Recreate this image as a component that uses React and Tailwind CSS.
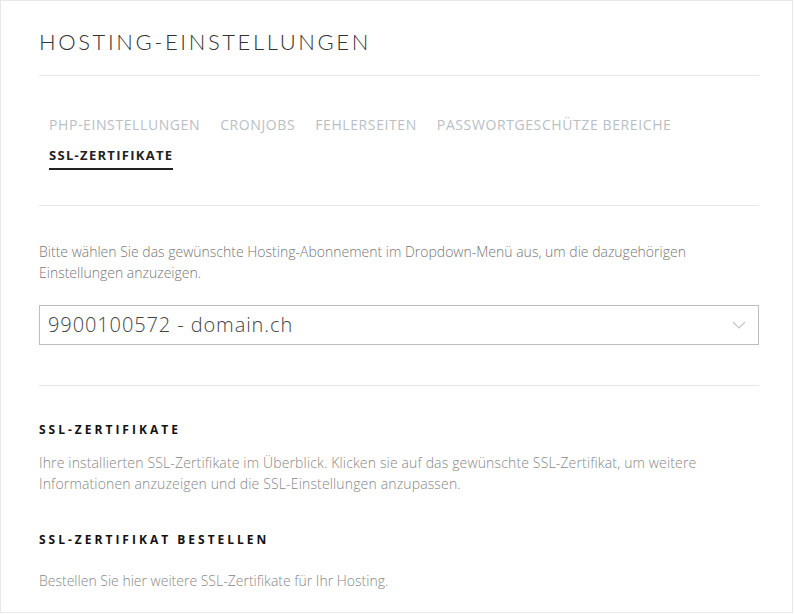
import React from 'react';

const tabs = [
  { label: 'PHP-Einstellungen' },
  { label: 'Cronjobs' },
  { label: 'Fehlerseiten' },
  { label: 'Passwortgeschütze Bereiche' },
  { label: 'SSL-Zertifikate', active: true },
];

function App() {
  return (
    <div className="w-[793px] min-h-[613px] border border-[#e8e8e8] bg-white font-['Open_Sans',sans-serif]">
      <div className="pl-[38px] pr-[33px] pt-[28px]">
        <h1 className="text-[22px] font-light leading-[26px] tracking-[2.6px] text-[#333] uppercase font-['Lato',sans-serif]">
          Hosting-Einstellungen
        </h1>
        <div className="mt-[20px] border-t border-[#e6e6e6]" />

        <div className="flex flex-wrap pt-[36px] pb-[33px]">
          {tabs.map((tab) => (
            <div key={tab.label} className="px-[10px] h-[30px]">
              <span
                className={
                  tab.active
                    ? 'inline-block pb-[4px] border-b-2 border-[#222] text-[13px] font-bold tracking-[1.3px] text-[#222] uppercase leading-[18px]'
                    : 'inline-block text-[14px] tracking-[0.6px] text-[#b9c0c5] uppercase leading-[18px]'
                }
              >
                {tab.label}
              </span>
            </div>
          ))}
        </div>

        <div className="border-t border-[#e6e6e6]" />

        <p className="pt-[35px] text-[14px] font-light leading-[21px] text-[#777]">
          Bitte wählen Sie das gewünschte Hosting-Abonnement im Dropdown-Menü aus, um die dazugehörigen
          Einstellungen anzuzeigen.
        </p>

        <div className="mt-[22px] h-[40px] border border-[#bdbdbd] flex items-center justify-between pl-[8px] pr-[12px]">
          <span className="text-[20px] font-light tracking-[0.9px] text-[#444]">9900100572 - domain.ch</span>
          <svg width="14" height="8" viewBox="0 0 14 8" fill="none" stroke="#c4c4c4" strokeWidth="1.2">
            <path d="M1 1l6 6 6-6" />
          </svg>
        </div>

        <div className="mt-[40px] border-t border-[#e6e6e6]" />

        <h2 className="pt-[36px] text-[12px] font-bold tracking-[3px] text-[#111] uppercase leading-[16px]">
          SSL-Zertifikate
        </h2>
        <p className="mt-[14px] text-[14px] font-light leading-[21px] text-[#888] tracking-[0.15px]">
          Ihre installierten SSL-Zertifikate im Überblick. Klicken sie auf das gewünschte SSL-Zertifikat, um weitere
          Informationen anzuzeigen und die SSL-Einstellungen anzupassen.
        </p>

        <h2 className="pt-[38px] text-[12px] font-bold tracking-[3px] text-[#111] uppercase leading-[16px]">
          SSL-Zertifikat bestellen
        </h2>
        <p className="mt-[22px] text-[14px] font-light leading-[21px] text-[#888]">
          Bestellen Sie hier weitere SSL-Zertifikate für Ihr Hosting.
        </p>
      </div>
    </div>
  );
}

export default App;
